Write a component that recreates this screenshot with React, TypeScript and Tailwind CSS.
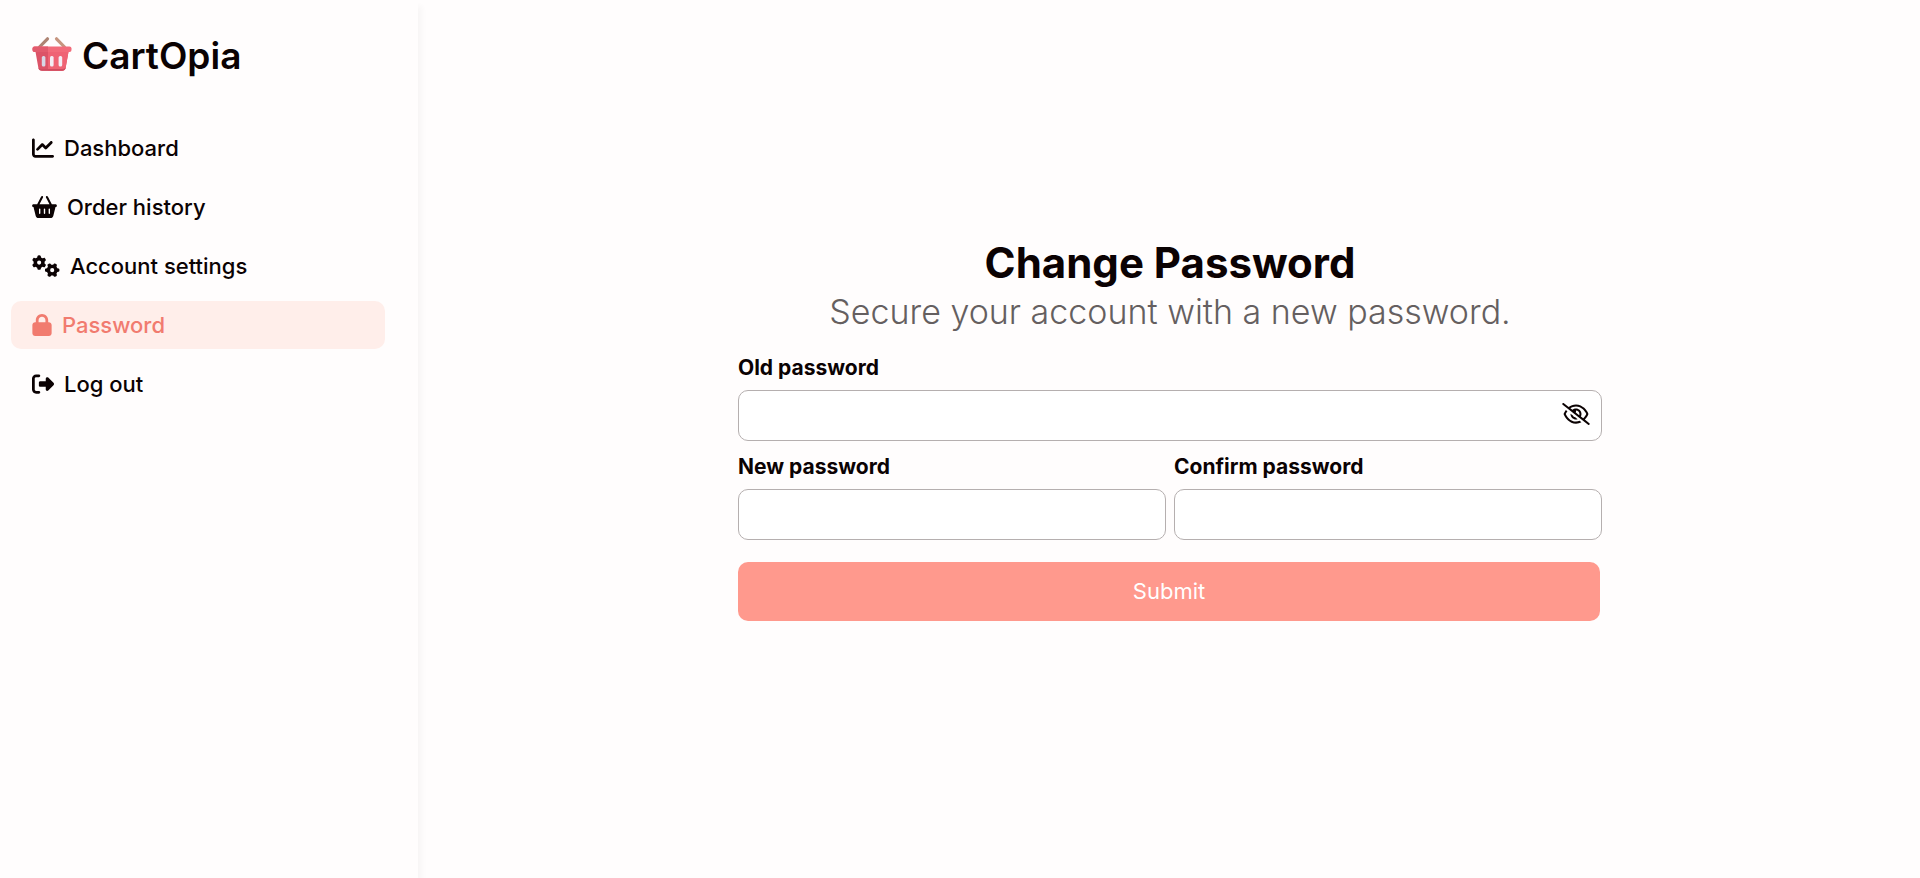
import { useState } from "react";
import type { ComponentType } from "react";
import {
  FaBasketShopping,
  FaChartLine,
  FaGears,
  FaLock,
  FaRegEye,
  FaRegEyeSlash,
  FaRightFromBracket,
} from "react-icons/fa6";

type NavItem = {
  label: string;
  href: string;
  icon: ComponentType<{ className?: string }>;
  iconClass: string;
  active?: boolean;
};

const navItems: NavItem[] = [
  { label: "Dashboard", href: "#dashboard", icon: FaChartLine, iconClass: "h-[22px] w-[22px] shrink-0" },
  { label: "Order history", href: "#orders", icon: FaBasketShopping, iconClass: "h-[22px] w-[25px] shrink-0" },
  { label: "Account settings", href: "#settings", icon: FaGears, iconClass: "h-[22px] w-[28px] shrink-0" },
  { label: "Password", href: "#password", icon: FaLock, iconClass: "h-[22px] w-[20px] shrink-0", active: true },
  { label: "Log out", href: "#logout", icon: FaRightFromBracket, iconClass: "h-[22px] w-[22px] shrink-0" },
];

function BasketLogo() {
  return (
    <svg viewBox="0 0 40 36" className="mb-1 h-9 w-10 shrink-0" aria-hidden="true">
      <path d="M7.500 11 15.500 2.800" stroke="#ae8473" strokeWidth="3.2" strokeLinecap="round" />
      <path d="M32.500 11 24.500 2.800" stroke="#c6957f" strokeWidth="3.2" strokeLinecap="round" />
      <path d="M3 13h34l-3.300 18.500a4 4 0 0 1-4 3.300H10.300a4 4 0 0 1-4-3.300Z" fill="#dc5367" />
      <path d="M16 13h21l-3.300 18.500a4 4 0 0 1-4 3.300H16Z" fill="#ef6374" />
      <path d="M6.300 31.500a4 4 0 0 0 4 3.300h19.400a4 4 0 0 0 4-3.300c-1 1-2.400 1.500-4 1.500H10.300c-1.600 0-3-.5-4-1.500Z" fill="#cf4c60" />
      <rect x="0.500" y="10.500" width="39" height="5.500" rx="2" fill="#f26b7a" />
      <path d="M2.500 10.500H16V16H2.500a2 2 0 0 1-2-2v-1.500a2 2 0 0 1 2-2Z" fill="#e25b6d" />
      <rect x="9.800" y="20" width="3.600" height="10.500" rx="1.500" fill="#d8d7e6" />
      <rect x="18" y="20" width="3.600" height="10.500" rx="1.500" fill="#f3eef5" />
      <rect x="26.600" y="20" width="3.600" height="10.500" rx="1.500" fill="#f3eef5" />
    </svg>
  );
}

function Sidebar() {
  return (
    <aside className="flex w-[418px] shrink-0 flex-col pt-8 pr-[33px] pl-[11px] shadow-[4px_6px_6px_rgba(0,0,0,0.03)]">
      <a href="#home" className="flex items-center gap-[10px] pl-[21px] text-[37px] leading-[48px] font-semibold">
        <BasketLogo />
        CartOpia
      </a>
      <nav className="mt-11 flex flex-col gap-[11px]">
        {navItems.map(({ label, href, icon: Icon, iconClass, active }) => (
          <a
            key={label}
            href={href}
            aria-current={active ? "page" : undefined}
            className={
              active
                ? "flex h-12 items-center gap-[10px] rounded-[10px] bg-[#ffeeea] pl-[21px] text-[22px] font-medium text-[#f17b6f]"
                : "flex h-12 items-center gap-[10px] rounded-[10px] pl-[21px] text-[22px] font-medium"
            }
          >
            <Icon className={iconClass} />
            {label}
          </a>
        ))}
      </nav>
    </aside>
  );
}

function PasswordField({ id, label, toggle = false }: { id: string; label: string; toggle?: boolean }) {
  const [visible, setVisible] = useState(false);
  return (
    <div className="flex min-w-0 flex-col gap-2">
      <label htmlFor={id} className="text-[21px] leading-7 font-bold">
        {label}
      </label>
      <div className="relative">
        <input
          id={id}
          type={visible ? "text" : "password"}
          className="block h-[51px] w-full rounded-[10px] border border-[#b5afaf] bg-white px-3 text-[21px]"
        />
        {toggle && (
          <button
            type="button"
            aria-label={visible ? "Hide password" : "Show password"}
            onClick={() => setVisible(!visible)}
            className="absolute inset-y-0 right-3 flex items-center pb-1"
          >
            {visible ? <FaRegEye className="h-[22px] w-7" /> : <FaRegEyeSlash className="h-[22px] w-7" />}
          </button>
        )}
      </div>
    </div>
  );
}

export default function App() {
  return (
    <div className="flex min-h-screen bg-[#fffdfd] font-['Inter','Liberation_Sans',sans-serif] text-[#0b0203]">
      <Sidebar />
      <main className="flex min-w-0 flex-1 items-center justify-center pb-[22px] pl-[2px]">
        <form className="flex w-[864px] max-w-full flex-col" onSubmit={(event) => event.preventDefault()}>
          <h1 className="text-center text-[42px] leading-[56px] font-bold">Change Password</h1>
          <p className="text-center text-[34px] leading-[42px] font-light text-[#655f60]">
            Secure your account with a new password.
          </p>
          <div className="mt-[21px] grid grid-cols-2 gap-x-2 gap-y-3">
            <div className="col-span-2">
              <PasswordField id="old-password" label="Old password" toggle />
            </div>
            <PasswordField id="new-password" label="New password" />
            <PasswordField id="confirm-password" label="Confirm password" />
          </div>
          <button type="submit" className="mt-[22px] mr-[2px] h-[59px] rounded-[10px] bg-[#ff998d] text-[22px] text-white">
            Submit
          </button>
        </form>
      </main>
    </div>
  );
}
